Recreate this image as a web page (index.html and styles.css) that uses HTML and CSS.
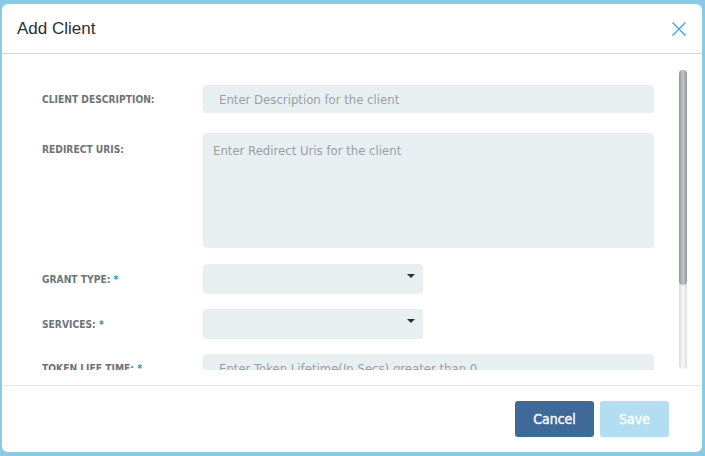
FILE: index.html
```html
<!DOCTYPE html>
<html lang="en">
<head>
<meta charset="utf-8">
<title>Add Client</title>
<link rel="stylesheet" href="styles.css">
</head>
<body>
<div class="modal">
  <div class="modal-header">
    <h2 class="modal-title">Add Client</h2>
    <button class="close" type="button" aria-label="Close">
      <svg width="14" height="14" viewBox="0 0 14 14"><path d="M0.5 0.5 L13.5 13.5 M13.5 0.5 L0.5 13.5" stroke="#3ea7dc" stroke-width="1.4" fill="none"/></svg>
    </button>
  </div>
  <div class="modal-body">
    <div class="scroll-area">
      <div class="scroller">
        <form class="form">
          <div class="row row-input">
            <label class="label">CLIENT DESCRIPTION:</label>
            <input class="field" type="text" placeholder="Enter Description for the client">
          </div>
          <div class="row row-area">
            <label class="label">REDIRECT URIS:</label>
            <textarea class="field area" placeholder="Enter Redirect Uris for the client"></textarea>
          </div>
          <div class="row row-select">
            <label class="label">GRANT TYPE: <span class="req">*</span></label>
            <div class="select"><span class="caret"></span></div>
          </div>
          <div class="row row-select">
            <label class="label">SERVICES: <span class="req">*</span></label>
            <div class="select"><span class="caret"></span></div>
          </div>
          <div class="row row-input">
            <label class="label">TOKEN LIFE TIME: <span class="req">*</span></label>
            <input class="field" type="text" placeholder="Enter Token Lifetime(In Secs) greater than 0">
          </div>
        </form>
      </div>
      <div class="scrollbar"><div class="thumb"></div></div>
    </div>
  </div>
  <div class="modal-footer">
    <button class="btn btn-cancel" type="button">Cancel</button>
    <button class="btn btn-save" type="button">Save</button>
  </div>
</div>
</body>
</html>
```
FILE: styles.css
```css
html, body {
  margin: 0;
  padding: 0;
}
body {
  background: #87cbe9;
  padding: 4px 3px 4px 2px;
  font-family: "DejaVu Sans Condensed", "Liberation Sans Narrow", Roboto, sans-serif;
  box-sizing: border-box;
  height: 456px;
  overflow: hidden;
}
.modal {
  width: 700px;
  height: 448px;
  background: #ffffff;
  border-radius: 6px;
  display: flex;
  flex-direction: column;
  overflow: hidden;
}
.modal-header {
  height: 49px;
  border-bottom: 1px solid #cbd9df;
  display: flex;
  align-items: center;
  justify-content: space-between;
  padding: 0 16px 0 15px;
  flex: none;
}
.modal-title {
  margin: 0;
  font-family: "Liberation Sans", Arial, sans-serif;
  font-size: 17px;
  font-weight: normal;
  color: #2b2f33;
  padding-top: 1px;
}
.close {
  border: 0;
  background: none;
  padding: 0;
  width: 14px;
  height: 14px;
  margin-top: 1px;
  display: flex;
}
.modal-body {
  padding: 16px 15px 15px 16px;
  flex: none;
}
.scroll-area {
  display: flex;
  height: 300px;
}
.scroller {
  flex: 1;
  overflow: hidden;
}
.scrollbar {
  width: 8px;
  flex: none;
  height: 299px;
  border-radius: 4px;
  background: linear-gradient(to right, #dcdcdc, #f6f6f6 45%, #f6f6f6 55%, #dcdcdc);
}
.thumb {
  height: 215px;
  border-radius: 4px;
  background: linear-gradient(to right, #929598, #c4c7c9 50%, #929598);
}
.form {
  padding: 15px 25px 18px 24px;
  display: flex;
  flex-direction: column;
  gap: 15px;
}
.row {
  display: flex;
  align-items: flex-start;
}
.row-area {
  margin-top: 5px;
  margin-bottom: 1px;
}
.label {
  width: 161px;
  flex: none;
  font-size: 10.2px;
  font-weight: bold;
  color: #6d7377;
  padding-top: 2px;
}
.row-input .label { line-height: 26px; }
.row-area .label { line-height: 29px; }
.row-select .label { line-height: 28px; }
.req {
  color: #1e8fd2;
}
.field {
  flex: 1;
  height: 28px;
  border: 0;
  border-radius: 4px;
  background: #e8eff1;
  padding: 0 15px 0 16px;
  font-family: inherit;
  font-size: 13px;
  color: #444;
  box-sizing: border-box;
  outline: none;
  margin: 0;
}
.field::placeholder {
  color: #9a9fa2;
}
.area {
  height: 115px;
  padding: 9px 10px;
  resize: none;
  display: block;
  line-height: 18px;
}
.select {
  width: 220px;
  height: 30px;
  background: #e8eff1;
  border-radius: 4px;
  display: flex;
  align-items: center;
  justify-content: flex-end;
  padding-right: 8px;
  box-sizing: border-box;
}
.caret {
  width: 0;
  height: 0;
  border-left: 4px solid transparent;
  border-right: 4px solid transparent;
  border-top: 4px solid #2e3133;
  margin-top: -7px;
}
.modal-footer {
  border-top: 1px solid #e3e8ea;
  flex: 1;
  display: flex;
  justify-content: flex-end;
  align-items: flex-start;
  gap: 6px;
  padding: 15px 33px 0 0;
}
.btn {
  height: 36px;
  border: 0;
  border-radius: 3px;
  color: #ffffff;
  font-family: inherit;
  font-size: 14px;
  font-weight: normal;
  -webkit-text-stroke: 0.35px #ffffff;
  padding: 0;
  margin: 0;
}
.btn-cancel {
  width: 79px;
  background: #3d6a99;
}
.btn-save {
  width: 69px;
  background: #b3def2;
}
```
